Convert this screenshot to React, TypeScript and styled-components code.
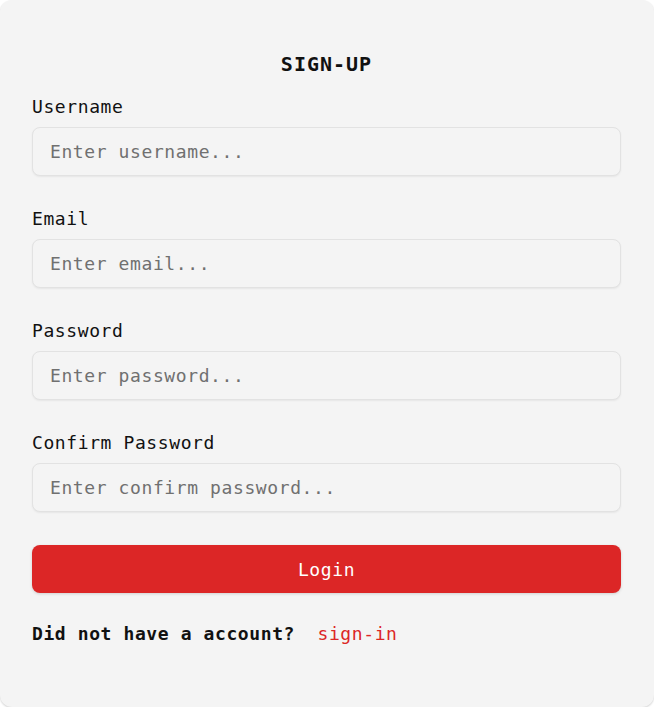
import React from 'react'
import styled, { createGlobalStyle } from 'styled-components'

const GlobalStyle = createGlobalStyle`
  html, body {
    margin: 0;
    padding: 0;
    background: #ffffff;
  }
  body {
    font-family: "DejaVu Sans Mono", "Liberation Mono", monospace;
  }
  * {
    box-sizing: border-box;
  }
`

const Card = styled.form`
  width: 654px;
  height: 707px;
  background: #f4f4f4;
  border-radius: 12px;
  box-shadow: 0 1px 2px rgba(0, 0, 0, 0.18);
  padding: 50px 33px 0 32px;
  display: flex;
  flex-direction: column;
`

const Title = styled.h1`
  margin: 0 0 17px;
  font-size: 20px;
  line-height: 28px;
  font-weight: 700;
  letter-spacing: 1px;
  text-align: center;
  color: #111111;
`

const Field = styled.div`
  display: flex;
  flex-direction: column;
  gap: 8px;
  margin-bottom: 31px;
`

const Label = styled.label`
  font-size: 18px;
  line-height: 24px;
  letter-spacing: 0.6px;
  color: #111111;
`

const Input = styled.input`
  height: 49px;
  width: 100%;
  padding: 0 17px;
  border: 1px solid #e2e2e2;
  border-radius: 8px;
  background: #f4f4f4;
  box-shadow: 0 1px 2px rgba(0, 0, 0, 0.06);
  font-family: inherit;
  font-size: 18px;
  letter-spacing: 0.6px;
  color: #111111;
  outline: none;

  &::placeholder {
    color: #707070;
  }
`

const Button = styled.button`
  margin-top: 2px;
  height: 48px;
  width: 100%;
  border: none;
  border-radius: 8px;
  background: #dc2626;
  color: #ffffff;
  font-family: inherit;
  font-size: 18px;
  letter-spacing: 0.6px;
  box-shadow: 0 1px 3px rgba(0, 0, 0, 0.15);
  cursor: pointer;
`

const Footer = styled.p`
  margin: 29px 0 0;
  font-size: 18px;
  line-height: 24px;
  letter-spacing: 0.6px;
  font-weight: 700;
  color: #111111;
`

const SignInLink = styled.a`
  margin-left: 11px;
  font-weight: 400;
  color: #dc2626;
  text-decoration: none;
`

const fields = [
  { id: 'username', label: 'Username', placeholder: 'Enter username...', type: 'text' },
  { id: 'email', label: 'Email', placeholder: 'Enter email...', type: 'email' },
  { id: 'password', label: 'Password', placeholder: 'Enter password...', type: 'password' },
  {
    id: 'confirm',
    label: 'Confirm Password',
    placeholder: 'Enter confirm password...',
    type: 'password',
  },
]

const App: React.FC = () => {
  return (
    <>
      <GlobalStyle />
      <Card onSubmit={(e) => e.preventDefault()}>
        <Title>SIGN-UP</Title>
        {fields.map((f) => (
          <Field key={f.id}>
            <Label htmlFor={f.id}>{f.label}</Label>
            <Input id={f.id} type={f.type} placeholder={f.placeholder} />
          </Field>
        ))}
        <Button type="submit">Login</Button>
        <Footer>
          Did not have a account? <SignInLink href="#">sign-in</SignInLink>
        </Footer>
      </Card>
    </>
  )
}

export default App
